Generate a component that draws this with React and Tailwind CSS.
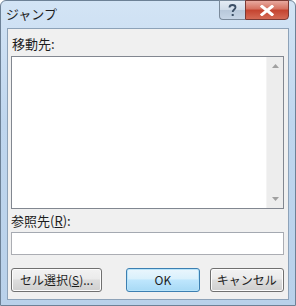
const font = { fontFamily: '"Noto Sans CJK JP", "Noto Sans", sans-serif' };

const WinButton = ({ children, className = "", primary = false }) => (
  <div
    className={`h-[24px] rounded-[3px] border flex items-center justify-center text-[12px] text-[#1e1e1e] ${
      primary
        ? "border-[#3c7fb1] shadow-[inset_0_0_0_1px_#b8e4fa] bg-[linear-gradient(#eaf6fd_0%,#d9f0fc_45%,#bee6fd_50%,#a7d9f5_100%)]"
        : "border-[#707070] shadow-[inset_0_0_0_1px_#fcfcfc] bg-[linear-gradient(#f2f2f2_0%,#ebebeb_45%,#dddddd_50%,#cfcfcf_100%)]"
    } ${className}`}
  >
    {children}
  </div>
);

const Arrow = ({ down }) => (
  <svg width="7" height="4" viewBox="0 0 7 4">
    <path d={down ? "M0 0H7L3.5 4Z" : "M0 4H7L3.5 0Z"} fill="#a0a0a0" />
  </svg>
);

export default function App() {
  return (
    <div
      className="w-[296px] h-[306px] rounded-t-[6px] border border-[#6d8196] bg-[linear-gradient(#d3e4f5_0%,#bfd6ee_40%,#b9d1ea_100%)] flex flex-col"
      style={font}
    >
      {/* title bar */}
      <div className="h-[27px] flex items-start justify-between">
        <div className="pl-[5px] pt-[4px] text-[13px] text-[#1e1e1e] leading-[17px]">ジャンプ</div>
        <div className="flex mr-[6px] mt-[-1px]">
          <div className="w-[26px] h-[20px] rounded-bl-[4px] border border-[#7a8a9b] border-r-0 bg-[linear-gradient(#e4ecf5_0%,#cfdbe8_50%,#b8c8da_51%,#c6d5e6_100%)] flex items-center justify-center">
            <svg width="9" height="13" viewBox="0 0 9 13">
              <path d="M1.5 3.5C1.5 1.8 2.8 1 4.5 1C6.3 1 7.5 2 7.5 3.4C7.5 5.4 4.7 5.6 4.7 8" stroke="#3b4f66" strokeWidth="1.8" fill="none" />
              <rect x="3.7" y="10" width="2" height="2" fill="#3b4f66" />
            </svg>
          </div>
          <div className="w-[44px] h-[20px] rounded-br-[4px] border border-[#7a3a34] bg-[linear-gradient(#e8a99f_0%,#d5705f_45%,#c4432f_50%,#d46a55_100%)] flex items-center justify-center">
            <svg width="14" height="11" viewBox="0 0 14 11">
              <path d="M2 1.5L12 9.5M12 1.5L2 9.5" stroke="#ffffff" strokeWidth="3" strokeLinecap="square" />
            </svg>
          </div>
        </div>
      </div>

      {/* client area */}
      <div className="mx-[6px] mb-[5px] flex-1 border border-[#8da2b8] bg-[#f0f0f0] flex flex-col pl-[3px] pr-[4px]">
        <div className="pt-[6px] h-[27px] text-[13px] leading-[17px] text-[#1e1e1e] pl-[1px]">移動先:</div>
        <div className="h-[153px] border border-[#828790] bg-white flex justify-end">
          <div className="w-[17px] bg-[#ededed] border-l border-[#f4f4f4] flex flex-col items-center justify-between py-[7px]">
            <Arrow />
            <Arrow down />
          </div>
        </div>
        <div className="pt-[4px] h-[23px] text-[13px] leading-[16px] text-[#1e1e1e]">
          参照先(<span className="underline">R</span>):
        </div>
        <div className="h-[23px] border border-[#abadb3] border-t-[#a4a9b1] bg-white" />
        <div className="flex mt-[13px]">
          <WinButton className="w-[92px]">
            セル選択(<span className="underline">S</span>)...
          </WinButton>
          <WinButton primary className="w-[74px] ml-[24px]">OK</WinButton>
          <WinButton className="w-[75px] ml-[10px]">キャンセル</WinButton>
        </div>
      </div>
    </div>
  );
}
